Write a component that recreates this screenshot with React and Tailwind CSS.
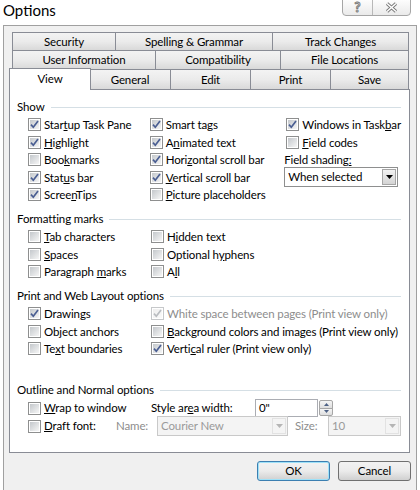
const FONT = "font-['Lato',_'Liberation_Sans',_sans-serif] text-[11.5px] tracking-[-0.12px]";

function Box({ checked, disabled }) {
  return (
    <span
      className={`flex h-[13px] w-[13px] shrink-0 items-center justify-center border bg-white p-px ${
        disabled ? "border-[#c6c8ca]" : "border-[#8e8f8f]"
      }`}
    >
      <span
        className={`relative flex h-full w-full items-center justify-center bg-gradient-to-br ${
          disabled ? "from-[#eeeeee] to-[#fafafa]" : "from-[#c4c8cc] to-[#f6f6f6]"
        }`}
      >
        {checked && (
          <svg width="11" height="11" viewBox="0 0 11 11" className="absolute -left-px -top-px">
            <path
              d="M2 5.6 L4.3 8.2 L9 2"
              fill="none"
              stroke={disabled ? "#b9bcc0" : "#4a5e92"}
              strokeWidth="1.7"
            />
          </svg>
        )}
      </span>
    </span>
  );
}

function Check({ checked, disabled, children, h = "h-[17.5px]" }) {
  return (
    <div className={`flex ${h} items-center gap-[3px]`}>
      <Box checked={checked} disabled={disabled} />
      <span className={`whitespace-nowrap ${disabled ? "text-[#8d8d8d]" : "text-black"}`}>{children}</span>
    </div>
  );
}

function Group({ title, className = "" }) {
  return (
    <div className={`flex h-[18px] items-center ${className}`}>
      <span className="whitespace-nowrap">{title}</span>
      <div className="ml-[6px] h-px flex-1 bg-[#d5dfe5]" />
    </div>
  );
}

function Tab({ children, className = "" }) {
  return (
    <div
      className={`flex items-center justify-center border border-[#898c95] bg-gradient-to-b from-[#f3f3f3] via-[#ebebeb] to-[#d9d9d9] ${className}`}
    >
      {children}
    </div>
  );
}

function Arrow({ color = "#000" }) {
  return (
    <svg width="7" height="4" viewBox="0 0 7 4">
      <path d="M0 0 H7 L3.5 4 Z" fill={color} />
    </svg>
  );
}

function Combo({ value, className = "", disabled }) {
  return (
    <div
      className={`flex h-[20px] items-stretch border ${
        disabled ? "border-[#c9c9c9] bg-[#f4f4f4] text-[#9a9a9a]" : "border-[#8e8f8f] bg-white text-black"
      } ${className}`}
    >
      <span className="flex flex-1 items-center pl-[3px] whitespace-nowrap">{value}</span>
      <span
        className={`m-px flex w-[14px] items-center justify-center border ${
          disabled
            ? "border-[#e2e2e2] bg-[#f4f4f4]"
            : "border-[#a6a6a6] bg-gradient-to-b from-[#f2f2f2] to-[#d4d4d4]"
        }`}
      >
        <Arrow color={disabled ? "#b5b5b5" : "#000"} />
      </span>
    </div>
  );
}

function Button({ children, primary }) {
  return (
    <button
      type="button"
      className={`flex h-[20px] w-[73px] items-center justify-center rounded-[3px] border bg-gradient-to-b from-[#f2f2f2] via-[#ebebeb] to-[#d0d0d0] text-black ${
        primary ? "border-[#3c7fb1] shadow-[inset_0_0_0_1px_#9ee1f8]" : "border-[#707070]"
      }`}
    >
      {children}
    </button>
  );
}

export default function App() {
  return (
    <div className={`flex h-[490px] w-[420px] flex-col overflow-hidden bg-white ${FONT} leading-none text-black`}>
      {/* title bar */}
      <div className="flex h-[25px] shrink-0 items-start justify-between">
        <span className="pl-[3px] pt-[3px] text-[15px] tracking-normal">Options</span>
        <div className="mr-[9px] -mt-px flex h-[17px] overflow-hidden rounded-b-[4px] border border-[#a6a6a6] bg-gradient-to-b from-[#fdfdfd] to-[#eaeaea]">
          <div className="flex w-[30px] items-center justify-center border-r border-[#b8b8b8] text-[13px] font-bold text-white [-webkit-text-stroke:1px_#7c7c7c]">
            ?
          </div>
          <div className="flex w-[37px] items-center justify-center">
            <svg width="13" height="11" viewBox="0 0 13 11">
              <path d="M2 1.5 L11 9.5 M11 1.5 L2 9.5" stroke="#7c7c7c" strokeWidth="3.4" />
              <path d="M2 1.5 L11 9.5 M11 1.5 L2 9.5" stroke="#ffffff" strokeWidth="1.5" />
            </svg>
          </div>
        </div>
      </div>

      {/* dialog body */}
      <div className="ml-[3px] w-[414px] flex-1 border-l border-r border-t border-[#a0a0a0] bg-[#f0f0f0] pl-[5px] pt-[6px]">
        <div className="w-[401px]">
          {/* tab rows */}
          <div className="ml-[3px] flex h-[19px]">
            <Tab className="w-[104px]">Security</Tab>
            <Tab className="-ml-px w-[158px]">Spelling &amp; Grammar</Tab>
            <Tab className="-ml-px w-[137px]">Track Changes</Tab>
          </div>
          <div className="-mt-px ml-[3px] flex h-[20px]">
            <Tab className="w-[144px]">User Information</Tab>
            <Tab className="-ml-px w-[126px]">Compatibility</Tab>
            <Tab className="-ml-px w-[129px]">File Locations</Tab>
          </div>
          <div className="-mt-[2px] flex h-[21px] items-end">
            <div className="relative top-px z-10 flex h-[22px] w-[82px] items-start justify-center border-l border-r border-t border-[#898c95] bg-white pt-[4px]">
              View
            </div>
            <Tab className="-ml-[2px] h-[20px] w-[82px] border-b-0">General</Tab>
            <Tab className="-ml-px h-[20px] w-[81px] border-b-0">Edit</Tab>
            <Tab className="-ml-px h-[20px] w-[81px] border-b-0">Print</Tab>
            <Tab className="-ml-px h-[20px] w-[79px] border-b-0">Save</Tab>
          </div>

          {/* panel */}
          <div className="h-[364px] border border-[#898c95] bg-white pl-[7px] pr-[8px] pt-[8px]">
            <Group title="Show" />
            <div className="flex pl-[11px]">
              <div className="w-[123px]">
                <Check checked>Star<u>t</u>up Task Pane</Check>
                <Check checked><u>H</u>ighlight</Check>
                <Check>Boo<u>k</u>marks</Check>
                <Check checked>Stat<u>u</u>s bar</Check>
                <Check checked>Scree<u>n</u>Tips</Check>
              </div>
              <div className="w-[138px]">
                <Check checked>Smart ta<u>g</u>s</Check>
                <Check checked>A<u>n</u>imated text</Check>
                <Check checked>Hori<u>z</u>ontal scroll bar</Check>
                <Check checked><u>V</u>ertical scroll bar</Check>
                <Check><u>P</u>icture placeholders</Check>
              </div>
              <div className="flex-1">
                <Check checked>Windows in Task<u>b</u>ar</Check>
                <Check><u>F</u>ield codes</Check>
                <div className="-ml-[2px] flex h-[17.5px] items-center">
                  Field shading<u>:</u>
                </div>
                <Combo value="When selected" className="-ml-[2px] -mt-[1.5px] w-[114px]" />
              </div>
            </div>

            <Group title="Formatting marks" className="mt-[6.5px]" />
            <div className="flex pl-[11px]">
              <div className="w-[123px]">
                <Check><u>T</u>ab characters</Check>
                <Check><u>S</u>paces</Check>
                <Check>Paragraph <u>m</u>arks</Check>
              </div>
              <div>
                <Check>H<u>i</u>dden text</Check>
                <Check>Optional h<u>y</u>phens</Check>
                <Check>A<u>l</u>l</Check>
              </div>
            </div>

            <Group title="Print and Web Layout options" className="mt-[6.5px]" />
            <div className="flex pl-[11px]">
              <div className="w-[123px]">
                <Check checked>Drawin<u>g</u>s</Check>
                <Check>Ob<u>j</u>ect anchors</Check>
                <Check>Te<u>x</u>t boundaries</Check>
              </div>
              <div>
                <Check checked disabled>White space between pages (Print view only)</Check>
                <Check><u>B</u>ackground colors and images (Print view only)</Check>
                <Check checked>Verti<u>c</u>al ruler (Print view only)</Check>
              </div>
            </div>

            <Group title="Outline and Normal options" className="mt-[23.5px]" />
            <div className="pl-[11px]">
              <div className="flex h-[18px] items-center">
                <div className="w-[123px]">
                  <Check h="h-[18px]"><u>W</u>rap to window</Check>
                </div>
                <span className="w-[104px] whitespace-nowrap">Style ar<u>e</u>a width:</span>
                <div className="flex h-[18px] w-[63px] items-center border border-[#abadb3] bg-white pl-[3px]">0"</div>
                <div className="ml-px flex h-[16px] w-[14px] flex-col">
                  <div className="flex flex-1 items-center justify-center rounded-t-[2px] border border-[#a6a6a6] bg-gradient-to-b from-[#f5f5f5] to-[#dedede]">
                    <svg width="5" height="3" viewBox="0 0 5 3"><path d="M0 3 H5 L2.5 0 Z" fill="#4d6185" /></svg>
                  </div>
                  <div className="-mt-px flex flex-1 items-center justify-center rounded-b-[2px] border border-[#a6a6a6] bg-gradient-to-b from-[#f5f5f5] to-[#dedede]">
                    <svg width="5" height="3" viewBox="0 0 5 3"><path d="M0 0 H5 L2.5 3 Z" fill="#4d6185" /></svg>
                  </div>
                </div>
              </div>
              <div className="flex h-[18px] items-center">
                <div className="w-[88px]">
                  <Check h="h-[18px]"><u>D</u>raft font:</Check>
                </div>
                <span className="w-[41px] text-[#8d8d8d]">Name:</span>
                <Combo value="Courier New" disabled className="w-[131px]" />
                <span className="ml-[7px] w-[33px] text-[#8d8d8d]">Size:</span>
                <Combo value="10" disabled className="w-[73px]" />
              </div>
            </div>
          </div>

          {/* buttons */}
          <div className="mt-[8px] flex w-[402px] justify-end gap-[8px]">
            <Button primary>OK</Button>
            <Button>Cancel</Button>
          </div>
        </div>
      </div>
    </div>
  );
}
